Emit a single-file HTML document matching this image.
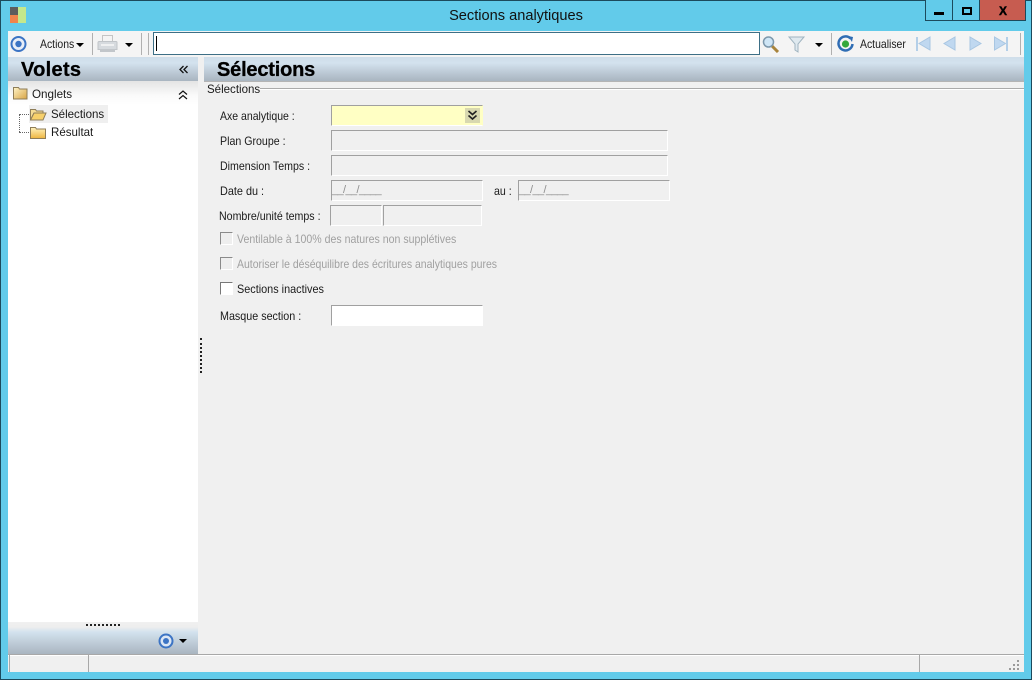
<!DOCTYPE html>
<html lang="fr"><head><meta charset="utf-8"><title>Sections analytiques</title>
<style>
html,body{margin:0;padding:0;width:1032px;height:680px;overflow:hidden;background:#62cbea}
body{position:relative;font-family:"Liberation Sans",sans-serif;font-size:12px;color:#1a1a1a}
.a,.t,.i,svg{position:absolute}
.t{white-space:nowrap;line-height:14px;transform:scaleX(.885);transform-origin:0 0}
.h{white-space:nowrap;position:absolute;font-size:20px;line-height:22px;font-weight:bold;color:#000;-webkit-text-stroke:.3px #000}
.g{color:#a0a0a0}
.i{box-sizing:border-box;border:1px solid #fff;border-top:1px solid #a0a0a0;border-left:1px solid #a0a0a0;background:#f0f0f0;height:21px;color:#8e8e8e;font-size:11px;line-height:19px;letter-spacing:-.6px;white-space:nowrap}
.c{position:absolute;box-sizing:border-box;width:13px;height:13px;left:220px;border:1px solid #fff;border-top-color:#8a8a8a;border-left-color:#8a8a8a;background:#eee}
.grad{background:linear-gradient(#cfdeea 0,#d3e2ee 25%,#b9c6d2 70%,#a9b5c0 100%)}
</style></head><body>
<div class="a" style="left:0;top:0;width:1032px;height:680px;box-sizing:border-box;border:1px solid #1c4a5c"></div>
<div class="a" style="left:10px;top:7px;width:8px;height:8px;background:#5d5d5d"></div>
<div class="a" style="left:10px;top:15px;width:8px;height:8px;background:#f0844c"></div>
<div class="a" style="left:18px;top:7px;width:8px;height:16px;background:#c4e88c"></div>
<div class="a" style="left:0;top:8px;width:1032px;text-align:center;font-size:14.6px;line-height:16px;color:#111;white-space:nowrap">Sections analytiques</div>

<div class="a" style="left:925px;top:0;width:28px;height:21px;box-sizing:border-box;border:1px solid #1c4a5c;border-top:0;background:#62cbea"></div>
<div class="a" style="left:934px;top:12px;width:10px;height:3px;background:#000"></div>
<div class="a" style="left:953px;top:0;width:27px;height:21px;box-sizing:border-box;border:1px solid #1c4a5c;border-top:0;border-left:0;background:#62cbea"></div>
<div class="a" style="left:962px;top:7px;width:10px;height:8px;box-sizing:border-box;border:2px solid #000"></div>
<div class="a" style="left:980px;top:0;width:46px;height:21px;box-sizing:border-box;border:1px solid #1c4a5c;border-top:0;border-left:0;background:#c75c50"></div>
<div class="a" style="left:980px;top:4px;width:46px;text-align:center;font-size:12px;line-height:14px;font-weight:bold;color:#000;-webkit-text-stroke:.4px #000">X</div>

<!-- client -->
<div class="a" style="left:8px;top:31px;width:1016px;height:641px;background:#f0f0f0"></div>

<!-- toolbar -->
<div class="a" style="left:8px;top:31px;width:1016px;height:26px;background:#f4f4f4"></div>
<svg style="left:10px;top:35px" width="18" height="18"><circle cx="8.500" cy="9" r="7" fill="#e8eef8" stroke="#3c74c4" stroke-width="2"/><circle cx="8.500" cy="9" r="3.200" fill="#3c74c4"/></svg>
<div class="t" style="left:40px;top:37px;transform:scaleX(.87)">Actions</div>
<svg style="left:76px;top:42px" width="9" height="6"><path d="M0 1h8L4 5z" fill="#000"/></svg>
<div class="a" style="left:92px;top:33px;width:1px;height:22px;background:#b0b0b0"></div>
<svg style="left:97px;top:34px" width="21" height="20"><rect x="5.500" y="1.500" width="10" height="6" fill="#f4f4f4" stroke="#c4c4c4"/><path d="M2 7.500h17a1 1 0 0 1 1 1v7H1v-7a1 1 0 0 1 1-1z" fill="#d6dade" stroke="#c0c4c8"/><rect x="3" y="15" width="15" height="3" fill="#c2c6ca"/><rect x="4" y="10" width="13" height="2" fill="#eff0f1"/></svg>
<svg style="left:125px;top:42px" width="9" height="6"><path d="M0 1h8L4 5z" fill="#000"/></svg>
<div class="a" style="left:141px;top:33px;width:1px;height:22px;background:#b0b0b0"></div>
<div class="a" style="left:148px;top:33px;width:1px;height:22px;background:#b0b0b0"></div>
<div class="a" style="left:153px;top:32px;width:607px;height:23px;box-sizing:border-box;border:1px solid #3d6f86;background:#fff"></div>
<div class="a" style="left:156px;top:36px;width:1px;height:15px;background:#000"></div>
<svg style="left:762px;top:35px" width="18" height="18"><path d="M10 11l6 6" stroke="#a8843c" stroke-width="3"/><circle cx="6.500" cy="7" r="5" fill="#cfe6f6" stroke="#7d98ac" stroke-width="1.500"/></svg>
<svg style="left:788px;top:35px" width="18" height="18"><path d="M1 2h15l-6 7v8l-3-2V9z" fill="#dfe9ef" stroke="#a0b4c0"/></svg>
<svg style="left:815px;top:42px" width="9" height="6"><path d="M0 1h8L4 5z" fill="#000"/></svg>
<div class="a" style="left:831px;top:33px;width:1px;height:22px;background:#b0b0b0"></div>
<svg style="left:837px;top:35px" width="18" height="18"><path d="M13.500 3.500A7 7 0 1 0 15.500 9" fill="none" stroke="#2f6db4" stroke-width="2.500"/><path d="M11 1l5 1-1 5z" fill="#2f6db4"/><circle cx="8.500" cy="9" r="3.600" fill="#35a83c"/></svg>
<div class="t" style="left:860px;top:37px;transform:scaleX(.87)">Actualiser</div>
<svg style="left:915px;top:36px" width="18" height="16"><rect x="1" y="1" width="2" height="14" fill="#b4cfe8"/><path d="M15 1v13L4 7.500z" fill="#c0d8f0" stroke="#a8c6e2"/></svg>
<svg style="left:942px;top:36px" width="16" height="16"><path d="M13 1v13L2 7.500z" fill="#c0d8f0" stroke="#a8c6e2"/></svg>
<svg style="left:968px;top:36px" width="16" height="16"><path d="M2 1v13l11-6.500z" fill="#c0d8f0" stroke="#a8c6e2"/></svg>
<svg style="left:993px;top:36px" width="18" height="16"><path d="M1.500 1v13l11-6.500z" fill="#c0d8f0" stroke="#a8c6e2"/><rect x="13" y="1" width="2" height="14" fill="#b4cfe8"/></svg>
<div class="a" style="left:1020px;top:33px;width:1px;height:22px;background:#b0b0b0"></div>

<!-- left panel -->
<div class="a grad" style="left:8px;top:57px;width:190px;height:24px"></div>
<div class="h" style="left:21px;top:59px;letter-spacing:.3px">Volets</div>
<svg style="left:179px;top:65px" width="10" height="9"><path d="M4.500 1L1 4.500 4.500 8M8.500 1L5 4.500 8.500 8" fill="none" stroke="#111" stroke-width="1.300"/></svg>
<div class="a" style="left:8px;top:81px;width:190px;height:24px;background:linear-gradient(#e4e4e4,#fafafa 60%,#fff)"></div>
<svg style="left:13px;top:86px" width="15" height="14"><defs><linearGradient id="fg" x1="0" y1="0" x2="1" y2="1"><stop offset="0" stop-color="#fff4c8"/><stop offset="1" stop-color="#d8a445"/></linearGradient></defs><path d="M.5 1.500h5l1 1.500h7.500v10H.5z" fill="url(#fg)" stroke="#8e7d58"/></svg>
<div class="t" style="left:32px;top:87px;transform:scaleX(.97)">Onglets</div>
<svg style="left:178px;top:90px" width="10" height="10"><path d="M1 4.500l4-3.500 4 3.500M1 9l4-3.500L9 9" fill="none" stroke="#111" stroke-width="1.200"/></svg>
<div class="a" style="left:8px;top:105px;width:190px;height:517px;background:#fff"></div>
<div class="a" style="left:19px;top:114px;width:0;height:18px;border-left:1px dotted #666"></div>
<div class="a" style="left:19px;top:114px;width:10px;height:0;border-top:1px dotted #666"></div>
<div class="a" style="left:19px;top:132px;width:10px;height:0;border-top:1px dotted #666"></div>
<div class="a" style="left:29px;top:105px;width:79px;height:18px;background:#efefef"></div>
<svg style="left:30px;top:108px" width="17" height="13"><path d="M.5 1.500h5l1 1.500h6.500v2H4L.5 12z" fill="#f5dc94" stroke="#8e7d58"/><path d="M4 5h12l-3 7H.5z" fill="#f7d06a" stroke="#8e7d58"/></svg>
<div class="t" style="left:51px;top:107px;transform:scaleX(.96)">Sélections</div>
<svg style="left:30px;top:126px" width="16" height="13"><defs><linearGradient id="fh" x1="0" y1="0" x2="0" y2="1"><stop offset="0" stop-color="#fff2bc"/><stop offset="1" stop-color="#eeb53f"/></linearGradient></defs><path d="M.5 1.500h5l1 1.500h9v9.500H.5z" fill="url(#fh)" stroke="#8e7d58"/></svg>
<div class="t" style="left:51px;top:125px;transform:scaleX(.96)">Résultat</div>
<div class="a" style="left:8px;top:622px;width:190px;height:32px;background:linear-gradient(#f0f0f0 0,#eee 5px,#d3e2ee 10px,#a9b5c0 100%)"></div>
<div class="a" style="left:86px;top:624px;width:34px;height:0;border-top:2px dotted #222"></div>
<svg style="left:157px;top:632px" width="18" height="18"><circle cx="9" cy="9" r="6.500" fill="#dbe6f4" stroke="#3c74c4" stroke-width="2"/><circle cx="9" cy="9" r="3" fill="#3c74c4"/></svg>
<svg style="left:179px;top:638px" width="9" height="6"><path d="M0 1h8L4 5z" fill="#000"/></svg>
<div class="a" style="left:200px;top:338px;width:0;height:35px;border-left:2px dotted #222"></div>

<!-- main -->
<div class="a grad" style="left:204px;top:57px;width:820px;height:24px"></div>
<div class="h" style="left:217px;top:59px;letter-spacing:-.2px">Sélections</div>
<div class="a" style="left:204px;top:81px;width:820px;height:1px;background:#b4b4b4"></div>
<div class="t" style="left:207px;top:82px;transform:scaleX(.96)">Sélections</div>
<div class="a" style="left:260px;top:88px;width:764px;height:1px;background:#aaa"></div>
<div class="a" style="left:260px;top:89px;width:764px;height:1px;background:#fff"></div>

<div class="t" style="left:220px;top:109px;transform:scaleX(.875)">Axe analytique :</div>
<div class="i" style="left:331px;top:105px;width:152px;background:#ffffc4;border-right-color:#ffffc4;border-bottom-color:#fff"></div>
<div class="a" style="left:465px;top:108px;width:15px;height:15px;background:#d8d8b0"></div>
<svg style="left:467px;top:110px" width="11" height="11"><path d="M1.500 1l4 3.500 4-3.500M1.500 5.500l4 3.500 4-3.500" fill="none" stroke="#222" stroke-width="1.600"/></svg>

<div class="t" style="left:220px;top:134px">Plan Groupe :</div>
<div class="i" style="left:331px;top:130px;width:337px"></div>
<div class="t" style="left:220px;top:159px">Dimension Temps :</div>
<div class="i" style="left:331px;top:155px;width:337px"></div>
<div class="t" style="left:220px;top:184px;transform:scaleX(.905)">Date du :</div>
<div class="i" style="left:331px;top:180px;width:152px">__/__/____</div>
<div class="t" style="left:494px;top:184px">au :</div>
<div class="i" style="left:518px;top:180px;width:152px">__/__/____</div>
<div class="t" style="left:219px;top:209px">Nombre/unité temps :</div>
<div class="i" style="left:330px;top:205px;width:52px"></div>
<div class="i" style="left:383px;top:205px;width:99px"></div>

<div class="c" style="top:232px"></div>
<div class="t g" style="left:237px;top:232px;transform:scaleX(.881)">Ventilable à 100% des natures non supplétives</div>
<div class="c" style="top:257px"></div>
<div class="t g" style="left:237px;top:257px;transform:scaleX(.872)">Autoriser le déséquilibre des écritures analytiques pures</div>
<div class="c" style="top:282px;background:#fff;border-color:#777 #fff #fff #777"></div>
<div class="t" style="left:237px;top:282px;transform:scaleX(.905)">Sections inactives</div>
<div class="t" style="left:220px;top:309px;transform:scaleX(.895)">Masque section :</div>
<div class="i" style="left:331px;top:305px;width:152px;background:#fff"></div>

<!-- status bar -->
<div class="a" style="left:8px;top:654px;width:1016px;height:1px;background:#a8a8a8"></div>
<div class="a" style="left:8px;top:655px;width:1016px;height:1px;background:#fff"></div>
<div class="a" style="left:9px;top:655px;width:1px;height:17px;background:#a8a8a8"></div>
<div class="a" style="left:88px;top:655px;width:1px;height:17px;background:#a8a8a8"></div>
<div class="a" style="left:919px;top:655px;width:1px;height:17px;background:#a8a8a8"></div>
<svg style="left:1008px;top:659px" width="14" height="12" fill="#9a9a9a"><rect x="9" y="1" width="2" height="2"/><rect x="5" y="5" width="2" height="2"/><rect x="9" y="5" width="2" height="2"/><rect x="1" y="9" width="2" height="2"/><rect x="5" y="9" width="2" height="2"/><rect x="9" y="9" width="2" height="2"/></svg>
</body></html>
